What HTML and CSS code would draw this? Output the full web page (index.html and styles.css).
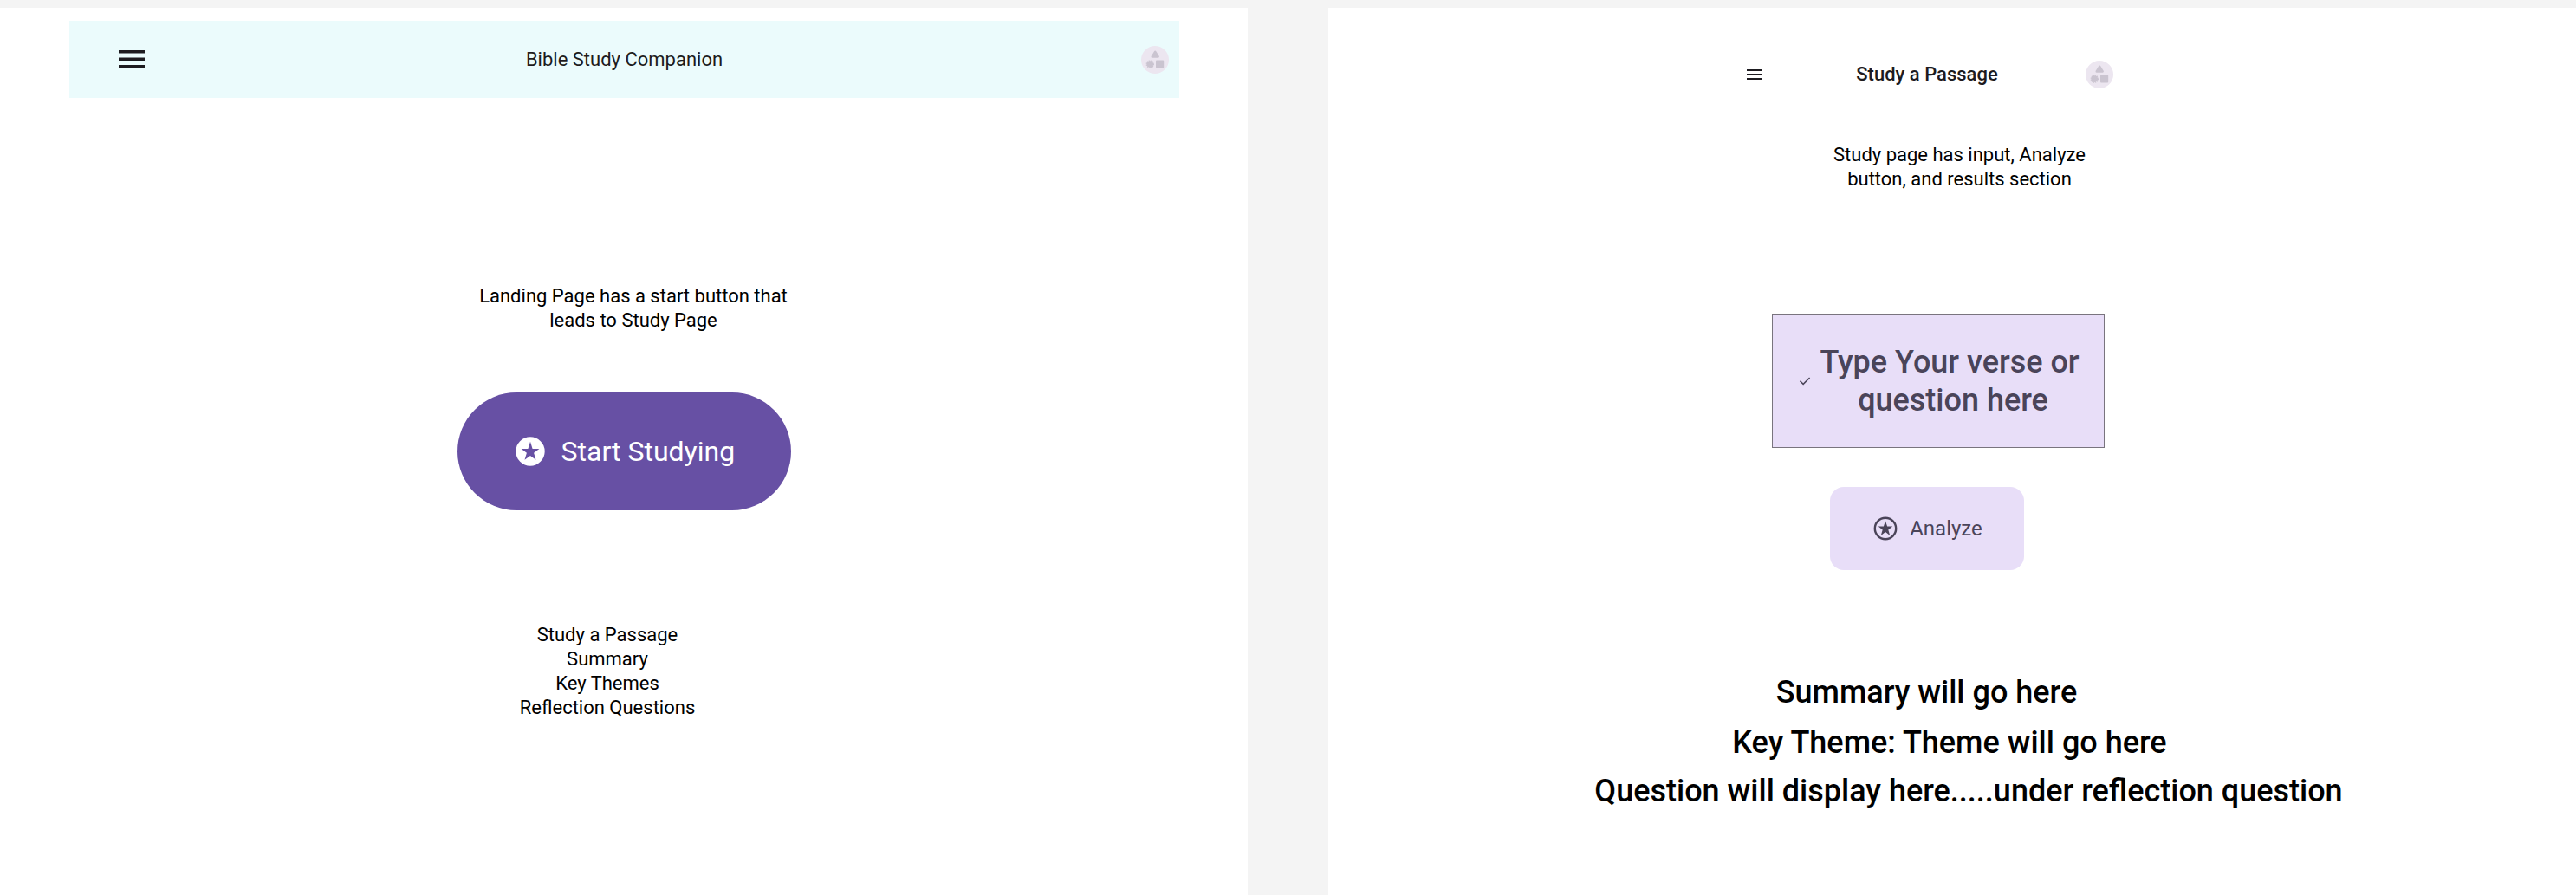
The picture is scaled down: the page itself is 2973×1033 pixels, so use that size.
FILE: index.html
```html
<!DOCTYPE html>
<html lang="en">
<head>
<meta charset="utf-8">
<title>Bible Study Companion</title>
<link rel="stylesheet" href="styles.css">
</head>
<body>
<svg class="defs" aria-hidden="true">
  <symbol id="avatar" viewBox="0 0 32 32">
    <circle cx="16" cy="16" r="16" fill="#ece6f0"/>
    <g fill="#cac4d0" stroke="#cac4d0" stroke-linejoin="round">
      <path d="M16.2 6.8 19.6 12.4H12.8Z" stroke-width="2.6"/>
      <rect x="18" y="17.4" width="7.2" height="7.2" stroke-width="2"/>
      <circle cx="10.3" cy="21.1" r="3.8" stroke="none"/>
      <circle cx="10.3" cy="21.1" r="4" fill="none" stroke-width="1.4" stroke-dasharray="1.25 .844"/>
    </g>
  </symbol>
</svg>
<main class="canvas">
  <section class="frame landing">
    <header class="bar">
      <svg class="menu" viewBox="0 0 30 21"><path d="M0 0h30v3.5H0zM0 8.5h30V12H0zM0 17h30v3.5H0z"/></svg>
      <h1 class="bar-title">Bible Study Companion</h1>
      <svg class="avatar"><use href="#avatar"/></svg>
    </header>
    <p class="note landing-note">Landing Page has a start button that leads to Study Page</p>
    <button class="start">
      <svg class="start-icon" viewBox="0 0 40 40"><circle cx="20" cy="20" r="16.7" fill="#fff"/><path fill="#6750a4" d="M20 8.8 22.6 17H30.4L24.1 21.7 26.5 29.8 20 25 13.5 29.8 15.9 21.7 9.6 17H17.4Z"/></svg>
      <span>Start Studying</span>
    </button>
    <ul class="note features">
      <li>Study a Passage</li>
      <li>Summary</li>
      <li>Key Themes</li>
      <li>Reflection Questions</li>
    </ul>
  </section>
  <section class="frame study">
    <header class="study-bar">
      <svg class="study-menu" viewBox="0 0 24 24"><path d="M3 18h18v-2H3v2zm0-5h18v-2H3v2zm0-7v2h18V6H3z"/></svg>
      <h2 class="study-title">Study a Passage</h2>
      <svg class="avatar"><use href="#avatar"/></svg>
    </header>
    <p class="note study-note">Study page has input, Analyze button, and results section</p>
    <div class="verse">
      <svg class="check" viewBox="0 0 24 24"><path d="M9.55 18 3.85 12.3l1.42-1.43 4.28 4.28 9.18-9.18 1.42 1.43Z"/></svg>
      <span class="verse-label">Type Your verse or question here</span>
    </div>
    <button class="analyze">
      <svg class="analyze-icon" viewBox="0 0 32 32"><circle cx="16" cy="16" r="12.2" fill="none" stroke="#4a4459" stroke-width="2.4"/><path fill="#4a4459" d="M16 7.2 18.1 13.6H24.3L19.3 17.5 21.2 24 16 20.1 10.8 24 12.7 17.5 7.7 13.6H13.9Z"/></svg>
      <span>Analyze</span>
    </button>
    <p class="result summary">Summary will go here</p>
    <p class="result theme">Key Theme: Theme will go here</p>
    <p class="result question">Question will display here.....under reflection question</p>
  </section>
</main>
</body>
</html>
```
FILE: styles.css
```css
* { box-sizing: border-box; }
body {
  margin: 0;
  background: #f4f4f4;
  color: #000;
  font-family: Roboto, "Liberation Sans", sans-serif;
}
h1, h2, p, ul { margin: 0; padding: 0; font-weight: 400; }
ul { list-style: none; }
button { border: 0; font-family: inherit; font-weight: 400; }
svg { display: block; flex: none; }
.defs { position: absolute; width: 0; height: 0; }

.canvas { display: flex; gap: 93px; height: 1033px; padding-top: 9px; overflow: hidden; }
.frame { display: flex; flex-direction: column; align-items: flex-start; width: 1440px; flex: none; background: #fff; }

.bar {
  display: flex;
  align-items: center;
  justify-content: space-between;
  width: 1281px;
  height: 89px;
  margin: 15px 0 0 80px;
  padding: 0 12px 0 57px;
  background: #ebfbfc;
  color: #1d1b20;
}
.menu { width: 30px; height: 21px; fill: #1d1b20; }
.bar-title { margin-left: -43px; font-size: 22px; line-height: 28px; }
.avatar { width: 32px; height: 32px; }

.note { font-size: 22px; line-height: 28px; text-align: center; }
.landing-note { width: 376px; margin: 215px 0 0 543px; }
.start {
  display: flex;
  align-items: center;
  gap: 16px;
  width: 385.5px;
  height: 136px;
  margin: 69px 0 0 527.5px;
  padding: 0 0 0 64px;
  border-radius: 68px;
  background: #6750a4;
  color: #fff;
  font-size: 32px;
  line-height: 40px;
  white-space: nowrap;
}
.start-icon { width: 40px; height: 40px; }
.features { width: 280px; margin: 130px 0 0 561px; }

.study-bar {
  display: flex;
  align-items: center;
  justify-content: space-between;
  width: 426px;
  height: 32px;
  margin: 61px 0 0 480px;
  color: #1d1b20;
}
.study-menu { width: 24px; height: 24px; fill: #1d1b20; }
.study-title { margin-left: 4px; font-size: 22px; line-height: 28px; font-weight: 500; }
.study-note { width: 320px; margin: 63px 0 0 568.5px; }
.verse {
  display: flex;
  align-items: center;
  gap: 8px;
  width: 384px;
  height: 155px;
  margin: 141px 0 0 512px;
  padding-left: 28px;
  border: 1px solid #79747e;
  background: #e8def8;
  color: #4a4459;
}
.check { width: 18px; height: 18px; fill: #4a4459; }
.verse-label { width: 308px; font-size: 36px; line-height: 44px; font-weight: 500; text-align: center; text-indent: -8px; }
.analyze {
  display: flex;
  align-items: center;
  justify-content: center;
  gap: 12px;
  width: 224px;
  height: 96px;
  margin: 45px 0 0 579px;
  border-radius: 16px;
  background: #e8def8;
  color: #4a4459;
  font-size: 24px;
  line-height: 32px;
}
.analyze-icon { width: 32px; height: 32px; }
.result { font-size: 36px; line-height: 44px; font-weight: 500; text-align: center; white-space: nowrap; }
.summary { width: 380px; margin: 119px 0 0 500.5px; }
.theme { width: 540px; margin: 14px 0 0 447px; }
.question { width: 900px; margin: 12px 0 0 289px; }
```
